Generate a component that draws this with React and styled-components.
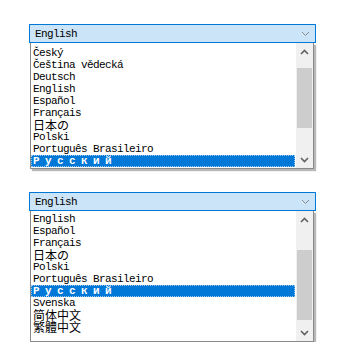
import styled, { createGlobalStyle } from 'styled-components';

const GlobalStyle = createGlobalStyle`
    body {
        margin: 0;
        background: #fff;
    }
`;

const Page = styled.div`
    display: flex;
    flex-direction: column;
    gap: 23px;
    padding: 24px 0 0 29px;
    font-family: "Liberation Mono", "DejaVu Sans Mono", monospace;
    color: #000;
`;

const Combo = styled.div`
    display: flex;
    flex-direction: column;
    width: 287px;
`;

const Field = styled.div`
    box-sizing: border-box;
    height: 19px;
    display: flex;
    align-items: center;
    justify-content: space-between;
    padding: 0 5px 0 5px;
    border: 1px solid #0078d7;
    background: #cce4f7;
    font-size: 11px;
    letter-spacing: -0.6px;
`;

const List = styled.div`
    box-sizing: border-box;
    display: flex;
    width: 284px;
    margin-left: 1px;
    border: 1px solid #8a8a8a;
    border-top: none;
    background: #fff;
    box-shadow: 2px 2px 1px rgba(0, 0, 0, 0.28);
`;

const Items = styled.div`
    flex: 1;
    display: flex;
    flex-direction: column;
    padding: ${p => p.$top}px 0 ${p => p.$bottom}px 0;
`;

const Item = styled.div`
    height: 12px;
    line-height: 12px;
    padding-left: 2px;
    margin-right: 1px;
    font-size: ${p => (p.$cjk ? '12px' : '11px')};
    font-family: ${p => (p.$cjk ? `"Noto Sans CJK ${p.$cjk}", sans-serif` : 'inherit')};
    letter-spacing: ${p => (p.$cjk ? '0' : p.$spaced ? '5.4px' : '-0.6px')};
    white-space: nowrap;
    ${p => p.$selected && `
        background: #0078d7;
        color: #fff;
        font-weight: bold;
        outline: 1px dotted #9cc8ee;
        outline-offset: -1px;
    `}
`;

const Scrollbar = styled.div`
    width: 17px;
    display: flex;
    flex-direction: column;
    background: #f0f0f0;
`;

const ArrowButton = styled.div`
    height: 17px;
    display: flex;
    align-items: center;
    justify-content: center;
`;

const Track = styled.div`
    flex: 1;
    display: flex;
    flex-direction: column;
`;

const Thumb = styled.div`
    margin: 0 1px;
    background: #cdcdcd;
`;

const Chevron = ({ up, color = '#606060', width = 1.6 }) => (
    <svg width="9" height="6" viewBox="0 0 9 6">
        <path
            d={up ? 'M1 5 L4.5 1.5 L8 5' : 'M1 1 L4.5 4.5 L8 1'}
            fill="none"
            stroke={color}
            strokeWidth={width}
        />
    </svg>
);

const languages = [
    { name: 'Český' },
    { name: 'Čeština vědecká' },
    { name: 'Deutsch' },
    { name: 'English' },
    { name: 'Español' },
    { name: 'Français' },
    { name: '日本の', cjk: 'JP' },
    { name: 'Polski' },
    { name: 'Português Brasileiro' },
    { name: 'Русский', spaced: true },
    { name: 'Svenska' },
    { name: '简体中文', cjk: 'SC' },
    { name: '繁體中文', cjk: 'TC' },
];

const Dropdown = ({ from, top, bottom, thumbTop, thumbHeight }) => (
    <Combo>
        <Field>
            <span>English</span>
            <Chevron color="#8a8a8a" width={1} />
        </Field>
        <List>
            <Items $top={top} $bottom={bottom}>
                {languages.slice(from, from + 10).map(lang => (
                    <Item
                        key={lang.name}
                        $cjk={lang.cjk}
                        $spaced={lang.spaced}
                        $selected={lang.name === 'Русский'}
                    >
                        {lang.name}
                    </Item>
                ))}
            </Items>
            <Scrollbar>
                <ArrowButton><Chevron up /></ArrowButton>
                <Track>
                    <Thumb style={{ marginTop: thumbTop, height: thumbHeight }} />
                </Track>
                <ArrowButton><Chevron /></ArrowButton>
            </Scrollbar>
        </List>
    </Combo>
);

const App = () => (
    <>
        <GlobalStyle />
        <Page>
            <Dropdown from={0} top={4} bottom={1} thumbTop={8} thumbHeight={60} />
            <Dropdown from={3} top={2} bottom={8} thumbTop={22} thumbHeight={70} />
        </Page>
    </>
);

export default App;
